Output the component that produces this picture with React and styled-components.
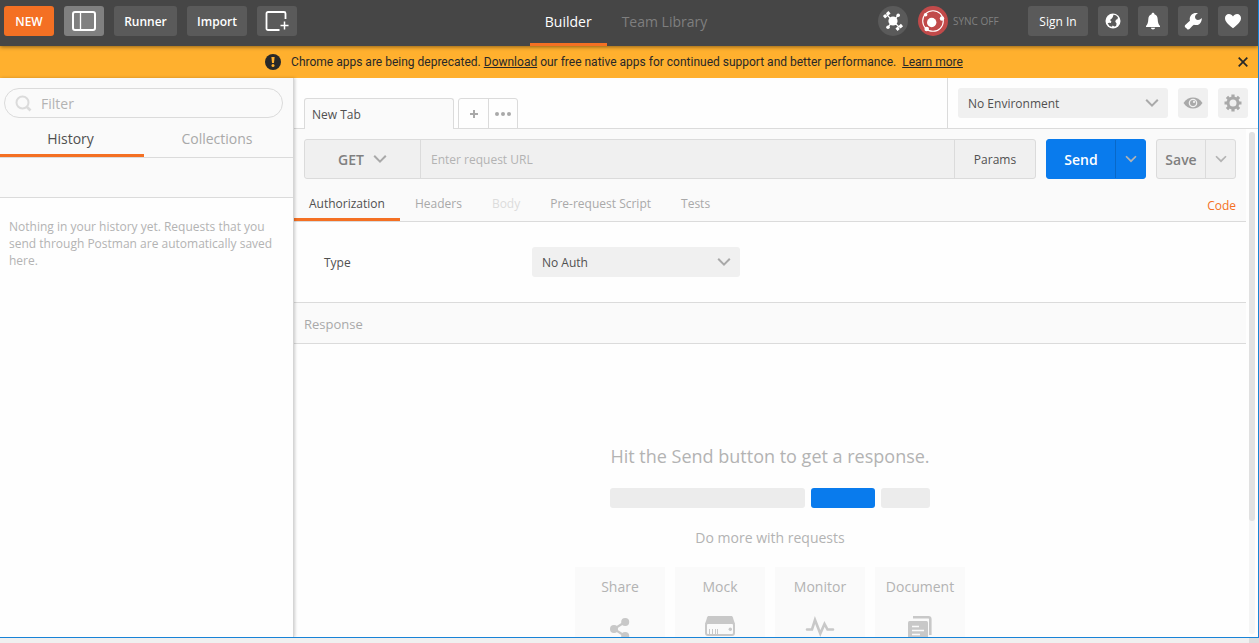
import React from 'react';
import styled, { createGlobalStyle, css } from 'styled-components';

const c = {
  orange: '#f47023',
  blue: '#097bed',
  line: '#dbdbdb',
  panel: '#fafafa',
  field: '#f0f0f0',
  text: '#505050',
  muted: '#a9a9a9',
  faint: '#b3b3b3',
  frame: '#1883d7',
};

const Global = createGlobalStyle`
  *, *::before, *::after { box-sizing: border-box; }
  body { margin: 0; overflow: hidden; background: #f0f0f0; }
  body, button, input, select {
    font-family: "Open Sans", "Noto Sans", sans-serif;
    font-size: 12px;
    color: ${c.text};
  }
  button, input, select { margin: 0; padding: 0; border: 0; outline: 0; background: none; }
  button { cursor: pointer; }
  svg { display: block; flex: none; }
  p, h1, h2 { margin: 0; font-weight: 400; }
`;

const Screen = styled.div`
  height: 100vh;
  display: flex;
  flex-direction: column;
`;

const Window = styled.div`
  flex: 1;
  min-height: 0;
  display: flex;
  flex-direction: column;
  overflow: hidden;
  background: #fefefe;
  border-right: 1px solid ${c.frame};
  border-bottom: 1px solid ${c.frame};
`;

const Desktop = styled.div`
  height: 5px;
  flex: none;
  display: flex;
  justify-content: flex-end;
  background: #f0f0f0;
`;

const DesktopCorner = styled.div`
  width: 10px;
  background: #dcdcdc;
`;

/* Top bar */

const TopBar = styled.header`
  position: relative;
  z-index: 3;
  height: 46px;
  flex: none;
  display: grid;
  grid-template-columns: 1fr auto 1fr;
  padding: 0 10px 0 4px;
  background: #464646;
  box-shadow: 0 1px 4px rgba(0, 0, 0, 0.45);
`;

const BarGroup = styled.div`
  display: flex;
  gap: 10px;
  padding-top: 6px;
  justify-content: ${(p) => (p.$end ? 'flex-end' : 'flex-start')};
`;

const barTones = { normal: '#5a5a5a', active: '#808080', primary: c.orange };

const BarButton = styled.button`
  height: 30px;
  width: ${(p) => p.$width}px;
  display: flex;
  align-items: center;
  justify-content: center;
  border-radius: 3px;
  color: #fff;
  font-weight: ${(p) => (p.$plain ? 400 : 600)};
  background: ${(p) => barTones[p.$tone || 'normal']};
`;

const BarTabs = styled.nav`
  display: flex;
`;

const BarTab = styled.button`
  padding: 0 15px;
  font-size: 14px;
  color: ${(p) => (p.$active ? '#fff' : '#7f7f7f')};
  border-bottom: 3px solid ${(p) => (p.$active ? c.orange : 'transparent')};
`;

const RoundButton = styled.button`
  width: 30px;
  height: 30px;
  border-radius: 50%;
  background: ${(p) => (p.$alert ? '#c14a4a' : '#5a5a5a')};
`;

const SyncLabel = styled.span`
  width: 65px;
  margin-left: -5px;
  line-height: 30px;
  font-size: 10px;
  color: #808080;
`;

/* Notice */

const Notice = styled.div`
  height: 32px;
  flex: none;
  display: flex;
  align-items: center;
  background: #ffb02e;
`;

const NoticeText = styled.p`
  flex: 1;
  display: flex;
  align-items: center;
  justify-content: center;
  gap: 10px;
  font-family: "Segoe UI", Roboto, sans-serif;
  color: #282828;

  a { color: inherit; }
`;

const CloseButton = styled.button`
  width: 30px;
  height: 32px;
  display: flex;
  align-items: center;
  justify-content: center;
`;

/* Sidebar */

const Body = styled.div`
  flex: 1;
  min-height: 0;
  display: flex;
`;

const Sidebar = styled.aside`
  position: relative;
  z-index: 2;
  width: 294px;
  flex: none;
  background: #fefefe;
  border-right: 1px solid #d5d5d5;
  box-shadow: 1px 0 3px rgba(0, 0, 0, 0.2);
`;

const SidebarHead = styled.div`
  background: ${c.panel};
  padding-top: 10px;
`;

const FilterBox = styled.label`
  height: 30px;
  margin: 0 10px 0 4px;
  padding: 0 10px;
  display: flex;
  align-items: center;
  gap: 9px;
  border: 1px solid ${c.line};
  border-radius: 15px;
`;

const FilterInput = styled.input`
  flex: 1;
  min-width: 0;
  font-size: 14px;
  &::placeholder { color: ${c.faint}; }
`;

const SideTabs = styled.div`
  height: 40px;
  display: grid;
  grid-template-columns: 144px 1fr;
  border-bottom: 1px solid ${c.line};
`;

const SideTab = styled.button`
  padding: 5px 3px 0 0;
  font-size: 14px;
  color: ${(p) => (p.$active ? c.text : c.muted)};
  border-bottom: 3px solid ${(p) => (p.$active ? c.orange : 'transparent')};
`;

const SideTools = styled.div`
  height: 40px;
  border-bottom: 1px solid ${c.line};
`;

const EmptyText = styled.p`
  padding: 20px 16px 20px 9px;
  line-height: 17px;
  color: ${c.faint};
`;

/* Main column */

const Main = styled.main`
  flex: 1;
  min-width: 0;
  display: flex;
  flex-direction: column;
`;

const TabStrip = styled.div`
  height: 51px;
  flex: none;
  display: flex;
  justify-content: space-between;
  border-bottom: 1px solid ${c.line};
`;

const OpenTabs = styled.div`
  display: flex;
  gap: 4px;
  padding: 20px 0 0 10px;
`;

const RequestTab = styled.button`
  width: 150px;
  height: 31px;
  padding: 0 7px;
  text-align: left;
  background: ${c.panel};
  border: 1px solid ${c.line};
  border-bottom: 0;
  border-radius: 3px 3px 0 0;
`;

const TabActions = styled.div`
  display: flex;
  height: 31px;
  border: 1px solid ${c.line};
  border-radius: 3px 3px 0 0;
`;

const TabAction = styled.button`
  width: 29px;
  display: flex;
  align-items: center;
  justify-content: center;
  & + & { border-left: 1px solid ${c.line}; }
`;

const Environment = styled.div`
  display: flex;
  gap: 10px;
  padding: 10px 10px 0;
  border-left: 1px solid ${c.line};
`;

const SquareButton = styled.button`
  width: 30px;
  height: 30px;
  display: flex;
  align-items: center;
  justify-content: center;
  border-radius: 3px;
  background: ${c.field};
`;

const SelectFrame = styled.div`
  display: grid;
  align-items: center;
  width: ${(p) => p.$width}px;
  height: ${(p) => p.$height || 30}px;
  border-radius: 3px;
  background: ${c.field};

  > * { grid-area: 1 / 1; }
  > svg {
    justify-self: end;
    margin-right: ${(p) => p.$inset || 9}px;
    pointer-events: none;
  }
`;

const Select = styled.select`
  appearance: none;
  width: 100%;
  height: 100%;
  padding-left: ${(p) => p.$indent || 10}px;
  ${(p) => p.$strong && css`
    font-size: 14px;
    font-weight: 600;
    color: #808080;
  `}
`;

const Scroller = styled.div`
  flex: 1;
  min-height: 0;
  display: flex;
`;

const Content = styled.div`
  flex: 1;
  min-width: 0;
  overflow: hidden;
`;

const ScrollRail = styled.div`
  width: 12px;
  padding: 3px;
  flex: none;
`;

const ScrollTrack = styled.div`
  height: 100%;
  border-radius: 3px;
  background: #f5f5f5;
`;

const ScrollThumb = styled.div`
  height: calc(100% - 113px);
  border-radius: 3px;
  background: #e1e1e1;
`;

const RequestPanel = styled.section`
  background: ${c.panel};
  border-bottom: 1px solid ${c.line};
`;

const UrlRow = styled.div`
  display: flex;
  gap: 10px;
  padding: 10px 10px 0;
`;

const Joined = styled.div`
  display: flex;
  height: 40px;
  flex: ${(p) => (p.$grow ? 1 : 'none')};
  min-width: 0;
  border: 1px solid ${(p) => (p.$primary ? c.blue : c.line)};
  border-radius: 3px;
  background: ${(p) => (p.$primary ? c.blue : c.field)};

  > * + * { border-left: 1px solid ${(p) => (p.$primary ? '#0868c8' : c.line)}; }
`;

const UrlInput = styled.input`
  flex: 1;
  min-width: 0;
  padding: 0 10px;
  &::placeholder { color: ${c.faint}; }
`;

const JoinedButton = styled.button`
  width: ${(p) => p.$width}px;
  display: flex;
  align-items: center;
  justify-content: center;
  font-size: ${(p) => (p.$tone ? 14 : 12)}px;
  font-weight: ${(p) => (p.$tone ? 600 : 400)};
  color: ${(p) => p.$tone || c.text};
`;

const RequestTabs = styled.div`
  display: flex;
  height: 42px;
`;

const SectionTab = styled.button`
  padding: 10px 15px 0;
  display: block;
  color: ${(p) => (p.$active ? c.text : c.muted)};
  border-bottom: 3px solid ${(p) => (p.$active ? c.orange : 'transparent')};
  &:disabled { color: #dcdcdc; }
`;

const CodeLink = styled.a`
  margin-left: auto;
  padding: 17px 10px 0;
  line-height: 20px;
  color: ${c.orange};
  text-decoration: none;
`;

const AuthPanel = styled.section`
  display: grid;
  grid-template-columns: 208px 1fr;
  align-items: center;
  height: 81px;
  padding: 0 30px;
  border-bottom: 1px solid ${c.line};
`;

const ResponseHead = styled.h2`
  height: 41px;
  padding: 0 10px;
  line-height: 42px;
  font-size: 13px;
  color: ${c.muted};
  background: ${c.panel};
  border-bottom: 1px solid ${c.line};
`;

const EmptyResponse = styled.section`
  display: flex;
  flex-direction: column;
  align-items: center;
  padding-top: 100px;
  color: ${c.faint};
`;

const EmptyTitle = styled.h1`
  font-size: 18px;
  line-height: 24px;
`;

const Sketch = styled.div`
  display: flex;
  gap: 6px;
  padding: 20px 0;
`;

const SketchBar = styled.div`
  width: ${(p) => p.$width}px;
  height: 20px;
  border-radius: 3px;
  background: ${(p) => (p.$primary ? c.blue : '#ececec')};
`;

const MoreText = styled.p`
  font-size: 14px;
  line-height: 20px;
`;

const Cards = styled.div`
  display: flex;
  gap: 10px;
  padding-top: 19px;
`;

const Card = styled.button`
  width: 90px;
  height: 100px;
  padding-top: 10px;
  display: flex;
  flex-direction: column;
  align-items: center;
  gap: 19px;
  font-size: 14px;
  line-height: 20px;
  color: ${c.faint};
  background: ${c.panel};
`;

/* Icons */

const Chevron = ({ size = 14, color = '#a9a9a9' }) => (
  <svg width={size} height={size} viewBox="0 0 14 14" fill="none" stroke={color} strokeWidth="2">
    <path d="M1.200 3.800 7 9.600 12.800 3.800" />
  </svg>
);

const PanelIcon = () => (
  <svg width="24" height="20" viewBox="0 0 24 20" fill="none" stroke="#fff">
    <rect x="1" y="1" width="22" height="18" rx="2" strokeWidth="2" />
    <path d="M8.500 2v16" strokeWidth="1.300" />
  </svg>
);

const NewWindowIcon = () => (
  <svg width="24" height="20" viewBox="0 0 24 20" fill="none" stroke="#fff" strokeWidth="1.800">
    <path d="M14.500 19H3a1.500 1.500 0 0 1-1.500-1.500V2.500A1.500 1.500 0 0 1 3 1h16a1.500 1.500 0 0 1 1.500 1.500V8" />
    <path d="M19.500 10.500v8M15.500 14.500h8" strokeWidth="1.500" />
  </svg>
);

const SatelliteIcon = () => (
  <svg width="30" height="30" viewBox="0 0 30 30" stroke="#fff" fill="#fff">
    <path d="M8.500 8.500 21.500 21.500M20 9.500 10 21" strokeWidth="1.200" />
    <path d="M6 11.200 11.500 6.300M18.500 23.800 24 19" strokeWidth="3.200" strokeDasharray="3 1 3.400" />
    <circle cx="15" cy="15" r="4.600" stroke="none" />
    <circle cx="20.200" cy="9.300" r="1.800" stroke="none" />
    <circle cx="10" cy="21.300" r="1.800" stroke="none" />
  </svg>
);

const SyncIcon = () => (
  <svg width="30" height="30" viewBox="0 0 30 30" fill="#fff">
    <circle cx="15" cy="15" r="10.300" fill="none" stroke="#fff" strokeWidth="1.100" />
    <circle cx="13.700" cy="16.500" r="4.700" />
    <circle cx="24" cy="12.500" r="2.200" />
    <circle cx="7.600" cy="8.700" r="1.800" />
    <circle cx="8.700" cy="23" r="2.300" />
  </svg>
);

const GlobeIcon = () => (
  <svg width="16" height="16" viewBox="0 0 16 16">
    <circle cx="8" cy="8" r="7.500" fill="#fff" />
    <path d="M8.500 1.800c2 .2 3.600 1.200 4.500 2.700l-.6 1.800-1.500.5-.6 2 1.300 1.800-.5 2.300-1.800.6-1.500-1-1 1.300-2.300-.9L2.600 10.300l1.700-.6 1.500.4.6-1.600L5 7l1.800-1.600 1-1.400Z" fill="#5a5a5a" />
  </svg>
);

const BellIcon = () => (
  <svg width="16" height="18" viewBox="0 0 16 18" fill="#fff">
    <path d="M8 .8c.9 0 1.400.6 1.400 1.400 2.200.7 3.200 2.600 3.300 5 .1 3.400.8 5.200 2.300 6.800v1H1v-1c1.500-1.600 2.200-3.400 2.300-6.800.1-2.400 1.100-4.300 3.300-5C6.600 1.400 7.100.8 8 .8ZM5.900 15.800h4.200C9.900 16.900 9.100 17.400 8 17.400s-1.900-.5-2.100-1.600Z" />
  </svg>
);

const WrenchIcon = () => (
  <svg width="18" height="18" viewBox="0 0 18 18" fill="#fff">
    <path d="M7.500 2.800C9.200 1 11.800.5 14 1.300c-1.600.8-2.900 2-3 3.500-.1 1.900 1.300 3.200 3 3.200 1.500 0 2.700-.7 3.700-1.900.3 2.400-.6 4.600-2.200 5.800-1.700 1.300-3.700 1.500-5.600.8l-1.600 1.300-2.800 3C4.500 18 2.800 17.300 2.500 16.200 1.300 15.900.2 14.400 1 13.300l3.200-3.100 1.700-1.400c-.5-2.200.1-4.400 1.600-6Z" />
  </svg>
);

const HeartIcon = () => (
  <svg width="18" height="16" viewBox="0 0 18 16" fill="#fff">
    <path d="M9 15.300C3.500 11 1 8.300 1 5 1 2.700 2.700 1 4.900 1 6.700 1 8.200 1.900 9 3.400 9.800 1.900 11.300 1 13.100 1 15.300 1 17 2.700 17 5c0 3.300-2.500 6-8 10.300Z" />
  </svg>
);

const AlertIcon = () => (
  <svg width="16" height="16" viewBox="0 0 16 16">
    <circle cx="8" cy="8" r="8" fill="#282828" />
    <path d="M6.400 3h3.200l-.6 6H7Z" fill="#ffb02e" />
    <circle cx="8" cy="11.500" r="1.500" fill="#ffb02e" />
  </svg>
);

const CloseIcon = () => (
  <svg width="10" height="10" viewBox="0 0 10 10" stroke="#282828" strokeWidth="1.700">
    <path d="m.7.7 8.600 8.600M9.300.7.7 9.300" />
  </svg>
);

const SearchIcon = () => (
  <svg width="17" height="17" viewBox="0 0 17 17" fill="none" stroke="#dbdbdb" strokeWidth="2">
    <circle cx="7.500" cy="7.500" r="6" />
    <path d="m12 12 3.500 3.500" strokeWidth="2.600" />
  </svg>
);

const PlusIcon = () => (
  <svg width="8" height="8" viewBox="0 0 8 8" stroke="#a9a9a9" strokeWidth="2">
    <path d="M4 0v8M0 4h8" />
  </svg>
);

const DotsIcon = () => (
  <svg width="16" height="4" viewBox="0 0 16 4" fill="#a9a9a9">
    <circle cx="2" cy="2" r="2" />
    <circle cx="8" cy="2" r="2" />
    <circle cx="14" cy="2" r="2" />
  </svg>
);

const EyeIcon = () => (
  <svg width="20" height="14" viewBox="0 0 20 14">
    <path d="M.5 7C3 3.300 6.300 1.500 10 1.500S17 3.300 19.500 7C17 10.700 13.700 12.500 10 12.500S3 10.700.5 7Z" fill="#a9a9a9" />
    <circle cx="10" cy="7" r="4.300" fill="#f0f0f0" />
    <circle cx="10" cy="7" r="3" fill="#a9a9a9" />
    <circle cx="11" cy="5.900" r="1.100" fill="#f0f0f0" />
  </svg>
);

const GearIcon = () => (
  <svg width="18" height="18" viewBox="0 0 18 18" fill="none" stroke="#a9a9a9">
    <circle cx="9" cy="9" r="5" strokeWidth="3" />
    {[0, 45, 90, 135].map((a) => (
      <path key={a} d="M9 .5v3M9 14.500v3" strokeWidth="3.200" transform={`rotate(${a} 9 9)`} />
    ))}
  </svg>
);

const ShareIcon = () => (
  <svg width="20" height="24" viewBox="0 0 20 24" fill="#c8c8c8" stroke="#c8c8c8">
    <path d="M15 6 4 13l11 7" fill="none" strokeWidth="2.200" />
    <circle cx="15.200" cy="6" r="4" stroke="none" />
    <circle cx="4" cy="13" r="4" stroke="none" />
    <circle cx="15.200" cy="20" r="4" stroke="none" />
  </svg>
);

const MockIcon = () => (
  <svg width="30" height="20" viewBox="0 0 30 20" fill="none" stroke="#c8c8c8">
    <path d="M4 0h22c1 0 1.500.4 1.800 1.200L30 8H0l2.200-6.800C2.500.4 3 0 4 0Z" fill="#c8c8c8" stroke="none" />
    <rect x="1" y="7" width="28" height="12" rx="2" strokeWidth="2" />
    <path d="M4.500 13v6M7.500 13v6M10.500 13v6M12.500 13v6" />
    <circle cx="25.300" cy="13.300" r="1.700" fill="#c8c8c8" stroke="none" />
  </svg>
);

const MonitorIcon = () => (
  <svg width="30" height="22" viewBox="0 0 30 22" fill="none" stroke="#c8c8c8" strokeWidth="2.600" strokeLinecap="round">
    <path d="M2 13.500h5L10 4l5.300 13.500L19.500 8l3 5.500H28" />
  </svg>
);

const DocumentIcon = () => (
  <svg width="26" height="26" viewBox="0 0 26 26">
    <path d="M6 1.300h15.500c1.200 0 1.800.6 1.800 1.800V19" fill="none" stroke="#c8c8c8" strokeWidth="2.600" />
    <rect x="1" y="5" width="20" height="21" rx="1.500" fill="#c8c8c8" />
    <path d="M5 10.500h7M5 14.500h12M5 18.500h8M5 22.500h12" stroke="#fafafa" strokeWidth="1.600" />
  </svg>
);

/* Page */

const cards = [
  { label: 'Share', Icon: ShareIcon },
  { label: 'Mock', Icon: MockIcon },
  { label: 'Monitor', Icon: MonitorIcon },
  { label: 'Document', Icon: DocumentIcon },
];

export default function App() {
  return (
    <Screen>
      <Global />
      <Window>
        <TopBar>
          <BarGroup>
            <BarButton $width={50} $tone="primary">NEW</BarButton>
            <BarButton $width={40} $tone="active" aria-label="Toggle sidebar"><PanelIcon /></BarButton>
            <BarButton $width={63}>Runner</BarButton>
            <BarButton $width={60}>Import</BarButton>
            <BarButton $width={40} aria-label="New window"><NewWindowIcon /></BarButton>
          </BarGroup>
          <BarTabs>
            <BarTab $active>Builder</BarTab>
            <BarTab>Team Library</BarTab>
          </BarTabs>
          <BarGroup $end>
            <RoundButton aria-label="Proxy"><SatelliteIcon /></RoundButton>
            <RoundButton $alert aria-label="Sync"><SyncIcon /></RoundButton>
            <SyncLabel>SYNC OFF</SyncLabel>
            <BarButton $width={60} $plain>Sign In</BarButton>
            <BarButton $width={30} aria-label="Browse"><GlobeIcon /></BarButton>
            <BarButton $width={30} aria-label="Notifications"><BellIcon /></BarButton>
            <BarButton $width={30} aria-label="Settings"><WrenchIcon /></BarButton>
            <BarButton $width={30} aria-label="Favourites"><HeartIcon /></BarButton>
          </BarGroup>
        </TopBar>

        <Notice>
          <NoticeText>
            <AlertIcon />
            <span>
              Chrome apps are being deprecated. <a href="#download">Download</a> our free native apps for
              continued support and better performance.&nbsp; <a href="#more">Learn more</a>
            </span>
          </NoticeText>
          <CloseButton aria-label="Dismiss"><CloseIcon /></CloseButton>
        </Notice>

        <Body>
          <Sidebar>
            <SidebarHead>
              <FilterBox>
                <SearchIcon />
                <FilterInput placeholder="Filter" aria-label="Filter" />
              </FilterBox>
              <SideTabs>
                <SideTab $active>History</SideTab>
                <SideTab>Collections</SideTab>
              </SideTabs>
              <SideTools />
            </SidebarHead>
            <EmptyText>
              Nothing in your history yet. Requests that you send through Postman are automatically saved here.
            </EmptyText>
          </Sidebar>

          <Main>
            <TabStrip>
              <OpenTabs>
                <RequestTab>New Tab</RequestTab>
                <TabActions>
                  <TabAction aria-label="Add tab"><PlusIcon /></TabAction>
                  <TabAction aria-label="More"><DotsIcon /></TabAction>
                </TabActions>
              </OpenTabs>
              <Environment>
                <SelectFrame $width={210}>
                  <Select aria-label="Environment"><option>No Environment</option></Select>
                  <Chevron />
                </SelectFrame>
                <SquareButton aria-label="Quick look"><EyeIcon /></SquareButton>
                <SquareButton aria-label="Manage environments"><GearIcon /></SquareButton>
              </Environment>
            </TabStrip>

            <Scroller>
              <Content>
                <RequestPanel>
                  <UrlRow>
                    <Joined $grow>
                      <SelectFrame $width={115} $height={38} $inset={33}>
                        <Select $strong $indent={33} aria-label="Method"><option>GET</option></Select>
                        <Chevron />
                      </SelectFrame>
                      <UrlInput placeholder="Enter request URL" aria-label="Request URL" />
                      <JoinedButton $width={81}>Params</JoinedButton>
                    </Joined>
                    <Joined $primary>
                      <JoinedButton $width={68} $tone="#fff">Send</JoinedButton>
                      <JoinedButton $width={30} aria-label="Send options"><Chevron size={12} color="#b3b3b3" /></JoinedButton>
                    </Joined>
                    <Joined>
                      <JoinedButton $width={48} $tone="#808080">Save</JoinedButton>
                      <JoinedButton $width={30} aria-label="Save options"><Chevron size={12} color="#b3b3b3" /></JoinedButton>
                    </Joined>
                  </UrlRow>
                  <RequestTabs>
                    <SectionTab $active>Authorization</SectionTab>
                    <SectionTab>Headers</SectionTab>
                    <SectionTab disabled>Body</SectionTab>
                    <SectionTab>Pre-request Script</SectionTab>
                    <SectionTab>Tests</SectionTab>
                    <CodeLink href="#code">Code</CodeLink>
                  </RequestTabs>
                </RequestPanel>

                <AuthPanel>
                  <label htmlFor="auth-type">Type</label>
                  <SelectFrame $width={208}>
                    <Select id="auth-type"><option>No Auth</option></Select>
                    <Chevron />
                  </SelectFrame>
                </AuthPanel>

                <ResponseHead>Response</ResponseHead>
                <EmptyResponse>
                  <EmptyTitle>Hit the Send button to get a response.</EmptyTitle>
                  <Sketch>
                    <SketchBar $width={195} />
                    <SketchBar $width={64} $primary />
                    <SketchBar $width={49} />
                  </Sketch>
                  <MoreText>Do more with requests</MoreText>
                  <Cards>
                    {cards.map(({ label, Icon }) => (
                      <Card key={label}>
                        {label}
                        <Icon />
                      </Card>
                    ))}
                  </Cards>
                </EmptyResponse>
              </Content>
              <ScrollRail>
                <ScrollTrack><ScrollThumb /></ScrollTrack>
              </ScrollRail>
            </Scroller>
          </Main>
        </Body>
      </Window>
      <Desktop><DesktopCorner /></Desktop>
    </Screen>
  );
}
